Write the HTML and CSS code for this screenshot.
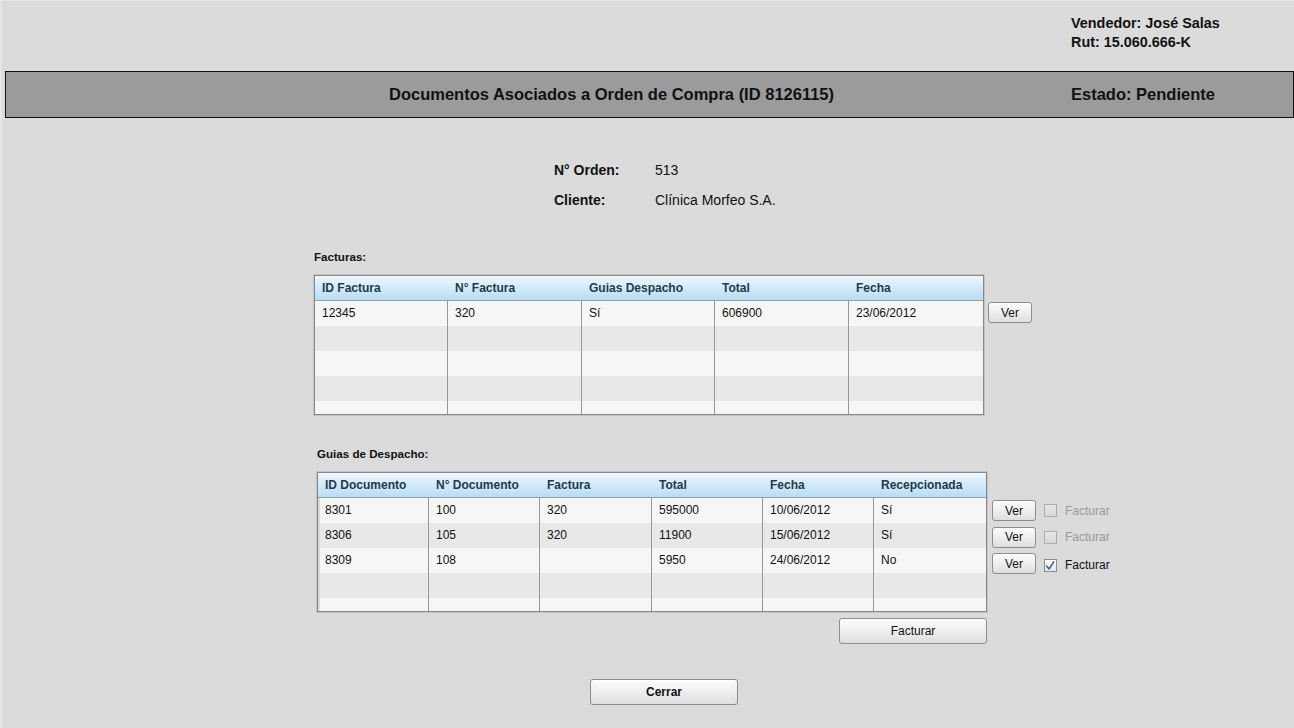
FILE: index.html
```html
<!DOCTYPE html>
<html lang="es">
<head>
<meta charset="utf-8">
<title>Documentos Asociados a Orden de Compra</title>
<link rel="stylesheet" href="styles.css">
</head>
<body>
<div class="window">
  <div class="top">
    <div>Vendedor: José Salas</div>
    <div>Rut: 15.060.666-K</div>
  </div>
  <div class="bar">
    <div class="bar-title">Documentos Asociados a Orden de Compra (ID 8126115)</div>
    <div class="bar-state">Estado: Pendiente</div>
  </div>

  <div class="info">
    <div class="info-label">N° Orden:</div><div class="info-value">513</div>
    <div class="info-label">Cliente:</div><div class="info-value">Clínica Morfeo S.A.</div>
  </div>

  <div class="section s1">
    <div class="sec-label">Facturas:</div>
    <div class="sec-row">
      <div class="table t1">
        <div class="thead">
          <div>ID Factura</div><div>N° Factura</div><div>Guias Despacho</div><div>Total</div><div>Fecha</div>
        </div>
        <div class="tbody">
          <div class="tr"><div>12345</div><div>320</div><div>Sí</div><div>606900</div><div>23/06/2012</div></div>
          <div class="tr"><div></div><div></div><div></div><div></div><div></div></div>
          <div class="tr"><div></div><div></div><div></div><div></div><div></div></div>
          <div class="tr"><div></div><div></div><div></div><div></div><div></div></div>
          <div class="tr"><div></div><div></div><div></div><div></div><div></div></div>
        </div>
      </div>
      <div class="side side1">
        <button class="btn ver">Ver</button>
      </div>
    </div>
  </div>

  <div class="section s2">
    <div class="sec-label">Guias de Despacho:</div>
    <div class="sec-row">
      <div class="col2">
        <div class="table t2">
          <div class="thead">
            <div>ID Documento</div><div>N° Documento</div><div>Factura</div><div>Total</div><div>Fecha</div><div>Recepcionada</div>
          </div>
          <div class="tbody">
            <div class="tr"><div>8301</div><div>100</div><div>320</div><div>595000</div><div>10/06/2012</div><div>Sí</div></div>
            <div class="tr"><div>8306</div><div>105</div><div>320</div><div>11900</div><div>15/06/2012</div><div>Sí</div></div>
            <div class="tr"><div>8309</div><div>108</div><div></div><div>5950</div><div>24/06/2012</div><div>No</div></div>
            <div class="tr"><div></div><div></div><div></div><div></div><div></div><div></div></div>
            <div class="tr"><div></div><div></div><div></div><div></div><div></div><div></div></div>
          </div>
        </div>
        <button class="btn wide facturar">Facturar</button>
      </div>
      <div class="side side2">
        <div class="act">
          <button class="btn ver">Ver</button>
          <span class="chk disabled"></span><span class="chk-label disabled">Facturar</span>
        </div>
        <div class="act">
          <button class="btn ver">Ver</button>
          <span class="chk disabled"></span><span class="chk-label disabled">Facturar</span>
        </div>
        <div class="act">
          <button class="btn ver">Ver</button>
          <span class="chk checked"><svg viewBox="0 0 13 13" width="13" height="13"><path d="M3 7.2 L5.6 10.2 L10.6 2.6" fill="none" stroke="#2f62a8" stroke-width="1.7" stroke-linecap="round" stroke-linejoin="round"/></svg></span><span class="chk-label">Facturar</span>
        </div>
      </div>
    </div>
  </div>

  <div class="footer">
    <button class="btn wide cerrar">Cerrar</button>
  </div>
</div>
</body>
</html>
```

FILE: styles.css
```css
html, body {
  margin: 0;
  padding: 0;
}
body {
  background: #dbdbdb;
  font-family: "Liberation Sans", Arial, sans-serif;
  color: #111;
}
.window {
  width: 1294px;
  height: 728px;
  overflow: hidden;
  box-sizing: border-box;
  border-left: 2px solid #e6e6e6;
  border-top: 1px solid #e6e6e6;
}
.top {
  height: 70px;
  box-sizing: border-box;
  padding: 13px 0 0 1069px;
  font-size: 14.4px;
  font-weight: bold;
  line-height: 19px;
  color: #111;
}
.bar {
  margin-left: 3px;
  height: 47px;
  box-sizing: border-box;
  border: 1px solid #111;
  background: #9b9b9b;
  display: flex;
  align-items: center;
  padding-bottom: 1px;
  font-size: 16.5px;
  font-weight: bold;
  color: #111;
}
.bar-title {
  margin-left: 383px;
  width: 682px;
}
.info {
  margin: 37px 0 0 552px;
  display: grid;
  grid-template-columns: 101px auto;
  grid-auto-rows: 30px;
  align-items: center;
  font-size: 14px;
  width: 300px;
}
.info-label {
  font-weight: bold;
}
.sec-label {
  font-size: 11.6px;
  font-weight: bold;
  line-height: 14px;
  margin-bottom: 11px;
}
.s1 {
  margin: 35px 0 0 312px;
}
.s2 {
  margin: 32px 0 0 315px;
}
.sec-row {
  display: flex;
  align-items: flex-start;
}
.table {
  box-sizing: border-box;
  border: 1px solid #888;
  box-shadow: 0 0 0 1px #c4c4c4;
  background: #f6f6f6;
  font-size: 12px;
}
.t1 {
  width: 670px;
  height: 140px;
}
.t2 {
  width: 670px;
  height: 140px;
}
.thead {
  display: grid;
  height: 24px;
  align-items: center;
  background: linear-gradient(#eef7fd, #d6ebfa 45%, #b9dcf3);
  border-bottom: 1px solid #8aa5b8;
  font-weight: bold;
  color: #1d3b50;
}
.thead > div {
  padding-left: 7px;
  white-space: nowrap;
}
.t1 .thead, .t1 .tr {
  grid-template-columns: 133px 134px 133px 134px 1fr;
}
.t2 .thead, .t2 .tr {
  grid-template-columns: 111px 111px 112px 111px 111px 1fr;
}
.tbody {
  height: 113px;
  overflow: hidden;
}
.t2 .tbody {
  border-left: 2px solid #d9d9d9;
}
.t2 .tbody .tr {
  margin-left: -2px;
}
.tr {
  display: grid;
  height: 25px;
}
.tr:nth-child(odd) {
  background: #f6f6f6;
}
.tr:nth-child(even) {
  background: #e8e8e8;
}
.tr > div {
  border-right: 1px solid #979797;
  padding: 5px 0 0 7px;
  line-height: 14px;
  white-space: nowrap;
}
.tr > div:last-child {
  border-right: none;
}
.btn {
  font-family: "Liberation Sans", Arial, sans-serif;
  font-size: 12px;
  color: #111;
  border: 1px solid #8d8d8d;
  border-radius: 3px;
  background: linear-gradient(#fbfbfb, #efefef 50%, #dedede);
  box-shadow: inset 0 1px 0 #ffffff;
  padding: 0;
  margin: 0;
  cursor: default;
}
.ver {
  width: 44px;
  height: 21px;
}
.side1 {
  margin: 27px 0 0 4px;
}
.side2 {
  margin: 28px 0 0 5px;
  display: flex;
  flex-direction: column;
  gap: 5.5px;
}
.act {
  display: flex;
  align-items: center;
  height: 21px;
}
.chk {
  width: 13px;
  height: 13px;
  box-sizing: border-box;
  border: 1px solid #8c8c8c;
  background: linear-gradient(#f3f3f3, #dcdcdc);
  margin-left: 8px;
  display: inline-flex;
}
.chk.disabled {
  border-color: #aeaeae;
  background: linear-gradient(#e8e8e8, #d8d8d8);
}
.chk.checked {
  background: linear-gradient(#fdfdfd, #e6e6e6);
  margin-top: 3px;
}
.chk svg {
  display: block;
  margin: -1px 0 0 -1px;
}
.chk-label {
  font-size: 12px;
  margin-left: 8px;
  color: #111;
}
.chk-label.disabled {
  color: #9a9a9a;
}
.act:last-child .chk-label {
  margin-top: 3px;
}
.col2 {
  display: flex;
  flex-direction: column;
  align-items: flex-end;
}
.wide {
  width: 148px;
  height: 26px;
}
.facturar {
  margin-top: 6px;
}
.footer {
  margin: 35px 0 0 588px;
}
.cerrar {
  font-weight: bold;
}
```
